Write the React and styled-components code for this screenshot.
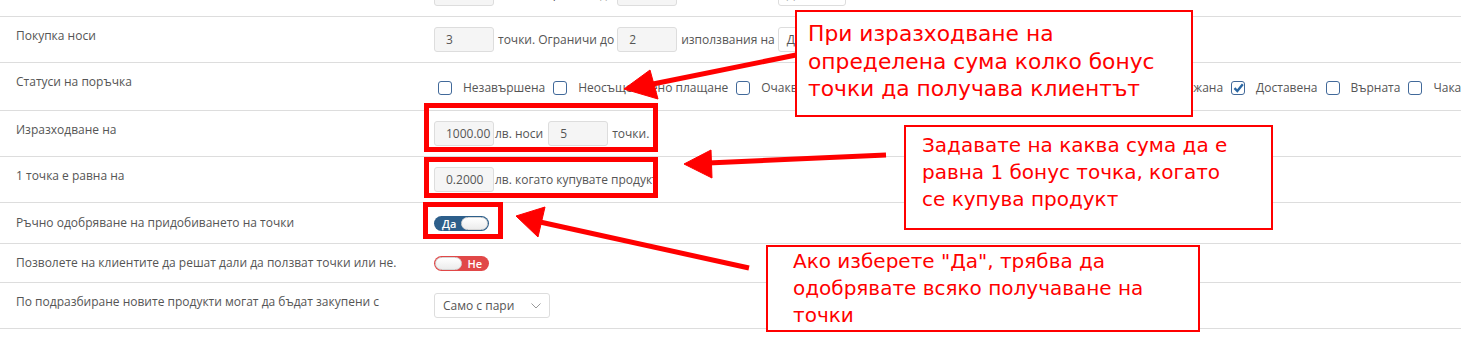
import React from 'react';
import styled, { createGlobalStyle } from 'styled-components';

const GlobalStyle = createGlobalStyle`
  html, body { margin: 0; padding: 0; background: #fff; }
  body { overflow: hidden; font-family: "Open Sans", "Noto Sans", sans-serif; }
`;

const Page = styled.div`
  position: relative;
  width: 1461px;
  height: 342px;
  overflow: hidden;
  background: #fff;
`;

const Settings = styled.div`
  margin-top: -29px;
`;

const Row = styled.div`
  display: grid;
  grid-template-columns: 418px 1fr;
  padding: ${p => (p.$pad ? `${p.$pad}px` : '10px')} 0 ${p => (p.$pad ? `${p.$pad}px` : '10px')} 16px;
  border-bottom: 1px solid #ddd;
  color: #555;
  font-size: 12px;
`;

const Label = styled.div`
  line-height: 18px;
  white-space: nowrap;
`;

const Controls = styled.div`
  display: flex;
  align-items: center;
  white-space: nowrap;
  min-height: ${p => p.$h || 18}px;
`;

const NumInput = styled.input`
  box-sizing: border-box;
  width: ${p => p.$w || 60}px;
  height: 25px;
  margin: 0;
  padding: 0 0 0 11px;
  background: #f5f5f5;
  border: 1px solid #ddd;
  border-radius: 3px;
  font-family: inherit;
  font-size: 12px;
  color: #555;
  outline: none;
`;

const Unit = styled.span`
  margin: 0 ${p => (p.$mr != null ? p.$mr : 3)}px 0 ${p => (p.$ml != null ? p.$ml : 4)}px;
  line-height: 18px;
`;

const DropBox = styled.div`
  box-sizing: border-box;
  display: flex;
  align-items: center;
  justify-content: space-between;
  width: ${p => p.$w}px;
  height: 25px;
  padding: 0 8px 0 8px;
  background: #fff;
  border: 1px solid #ddd;
  border-radius: 3px;
  font-size: 12px;
  color: #555;
`;

const CheckList = styled.div`
  display: flex;
  align-items: center;
  height: 25px;
  padding: 0 0 0 4px;
  margin-top: 2px;
  white-space: nowrap;
`;

const CheckItem = styled.label`
  display: flex;
  align-items: center;
  flex-shrink: 0;
  margin-right: 8px;
  line-height: 18px;
`;

const Box = styled.span`
  box-sizing: border-box;
  display: inline-flex;
  align-items: center;
  justify-content: center;
  width: 14px;
  height: 14px;
  margin-right: 11px;
  border: 1.5px solid #41699a;
  border-radius: 3px;
  background: #fff;
`;

const Toggle = styled.span`
  box-sizing: border-box;
  display: inline-flex;
  flex-direction: ${p => (p.$on ? 'row' : 'row-reverse')};
  align-items: center;
  justify-content: space-between;
  width: 55px;
  height: 15px;
  padding: ${p => (p.$on ? '0 1px 0 8px' : '0 7px 0 1px')};
  border-radius: 8px;
  background: ${p => (p.$on ? '#2d5f8b' : '#e14848')};
  color: #fff;
  font-size: 11px;
  font-weight: 600;
  line-height: 15px;
`;

const Knob = styled.span`
  box-sizing: border-box;
  width: 27px;
  height: 13px;
  border-radius: 7px;
  border: 1px solid #d6d6d6;
  background: linear-gradient(#ffffff, #ececec);
`;

const Mark = styled.div`
  position: absolute;
  box-sizing: border-box;
  left: ${p => p.$x}px;
  top: ${p => p.$y}px;
  width: ${p => p.$w}px;
  height: ${p => p.$h}px;
  border: 5px solid #f00;
`;

const Callout = styled.div`
  position: absolute;
  box-sizing: border-box;
  left: ${p => p.$x}px;
  top: ${p => p.$y}px;
  width: ${p => p.$w}px;
  height: ${p => p.$h}px;
  padding: ${p => p.$pad};
  background: #fff;
  border: 2px solid #f00;
  color: #f00;
  font-family: "DejaVu Sans", sans-serif;
  font-size: ${p => p.$size || 20}px;
  line-height: ${p => p.$lh || 27}px;
  white-space: nowrap;
`;

const Arrows = styled.svg`
  position: absolute;
  left: 0;
  top: 0;
  pointer-events: none;
`;

const Check = ({ on, children }) => (
  <CheckItem>
    <Box>
      {on && (
        <svg width="11" height="10" viewBox="0 0 11 10">
          <path d="M1.5 5.2 L4.3 8 L9.8 1.2" fill="none" stroke="#2a67a3" strokeWidth="2.4" />
        </svg>
      )}
    </Box>
    {children}
  </CheckItem>
);

const Chevron = () => (
  <svg width="10" height="6" viewBox="0 0 10 6">
    <path d="M0.5 0.5 L5 5 L9.5 0.5" fill="none" stroke="#999" strokeWidth="1" />
  </svg>
);

const statuses = [
  ['Незавършена', false],
  ['Неосъществено плащане', false],
  ['Очаквана', false],
  ['Обработва се', false],
  ['Изпратена', false],
  ['Анулирана', false],
  ['Задържана', false],
  ['Доставена', true],
  ['Върната', false],
  ['Чака наличност', false],
];

const arrows = [
  { line: [653, 84, 796, 55], head: '624,89 650,70 658,99' },
  { line: [708, 163, 886, 155], head: '684,164 711,150 712,178' },
  { line: [540, 222, 749, 268], head: '516,216 545,207 538,237' },
];

export default function App() {
  return (
    <Page>
      <GlobalStyle />
      <Settings>
        <Row>
          <Label>Регистрация носи</Label>
          <Controls>
            <NumInput defaultValue="10" readOnly />
            <Unit>точки. Ограничи до</Unit>
            <NumInput defaultValue="1" readOnly />
            <Unit>използвания на</Unit>
            <DropBox $w={68}>Ден</DropBox>
          </Controls>
        </Row>
        <Row>
          <Label>Покупка носи</Label>
          <Controls>
            <NumInput defaultValue="3" readOnly />
            <Unit>точки. Ограничи до</Unit>
            <NumInput defaultValue="2" readOnly />
            <Unit>използвания на</Unit>
            <DropBox $w={68}>Ден</DropBox>
          </Controls>
        </Row>
        <Row>
          <Label>Статуси на поръчка</Label>
          <CheckList>
            {statuses.map(([name, on]) => (
              <Check key={name} on={on}>{name}</Check>
            ))}
          </CheckList>
        </Row>
        <Row>
          <Label>Изразходване на</Label>
          <Controls>
            <NumInput defaultValue="1000.00" readOnly />
            <Unit $ml={1} $mr={5}>лв. носи</Unit>
            <NumInput defaultValue="5" readOnly />
            <Unit>точки.</Unit>
          </Controls>
        </Row>
        <Row>
          <Label>1 точка е равна на</Label>
          <Controls>
            <NumInput defaultValue="0.2000" readOnly />
            <Unit $ml={1}>лв. когато купувате продукт</Unit>
          </Controls>
        </Row>
        <Row $pad={11}>
          <Label>Ръчно одобряване на придобиването на точки</Label>
          <Controls>
            <Toggle $on>
              Да
              <Knob />
            </Toggle>
          </Controls>
        </Row>
        <Row>
          <Label>Позволете на клиентите да решат дали да ползват точки или не.</Label>
          <Controls>
            <Toggle>
              Не
              <Knob />
            </Toggle>
          </Controls>
        </Row>
        <Row>
          <Label>По подразбиране новите продукти могат да бъдат закупени с</Label>
          <Controls>
            <DropBox $w={116}>
              Само с пари
              <Chevron />
            </DropBox>
          </Controls>
        </Row>
      </Settings>

      <Mark $x={424} $y={103} $w={234} $h={49} />
      <Mark $x={424} $y={157} $w={234} $h={41} />
      <Mark $x={423} $y={202} $w={80} $h={37} />

      <Arrows width="1461" height="342">
        {arrows.map((a, i) => (
          <g key={i} fill="#f00" stroke="#f00">
            <line x1={a.line[0]} y1={a.line[1]} x2={a.line[2]} y2={a.line[3]} strokeWidth="5" />
            <polygon points={a.head} strokeWidth="1" />
          </g>
        ))}
      </Arrows>

      <Callout $x={795} $y={10} $w={398} $h={107} $pad="8px 0 0 11px" $size={21.8} $lh={27.5}>
        При изразходване на
        <br />
        определена сума колко бонус
        <br />
        точки да получава клиентът
      </Callout>
      <Callout $x={904} $y={125} $w={369} $h={105} $pad="5px 0 0 16px">
        Задавате на каква сума да е
        <br />
        равна 1 бонус точка, когато
        <br />
        се купува продукт
      </Callout>
      <Callout $x={766} $y={245} $w={434} $h={87} $pad="1px 0 0 25px" $lh={27}>
        Ако изберете "Да", трябва да
        <br />
        одобрявате всяко получаване на
        <br />
        точки
      </Callout>
    </Page>
  );
}
